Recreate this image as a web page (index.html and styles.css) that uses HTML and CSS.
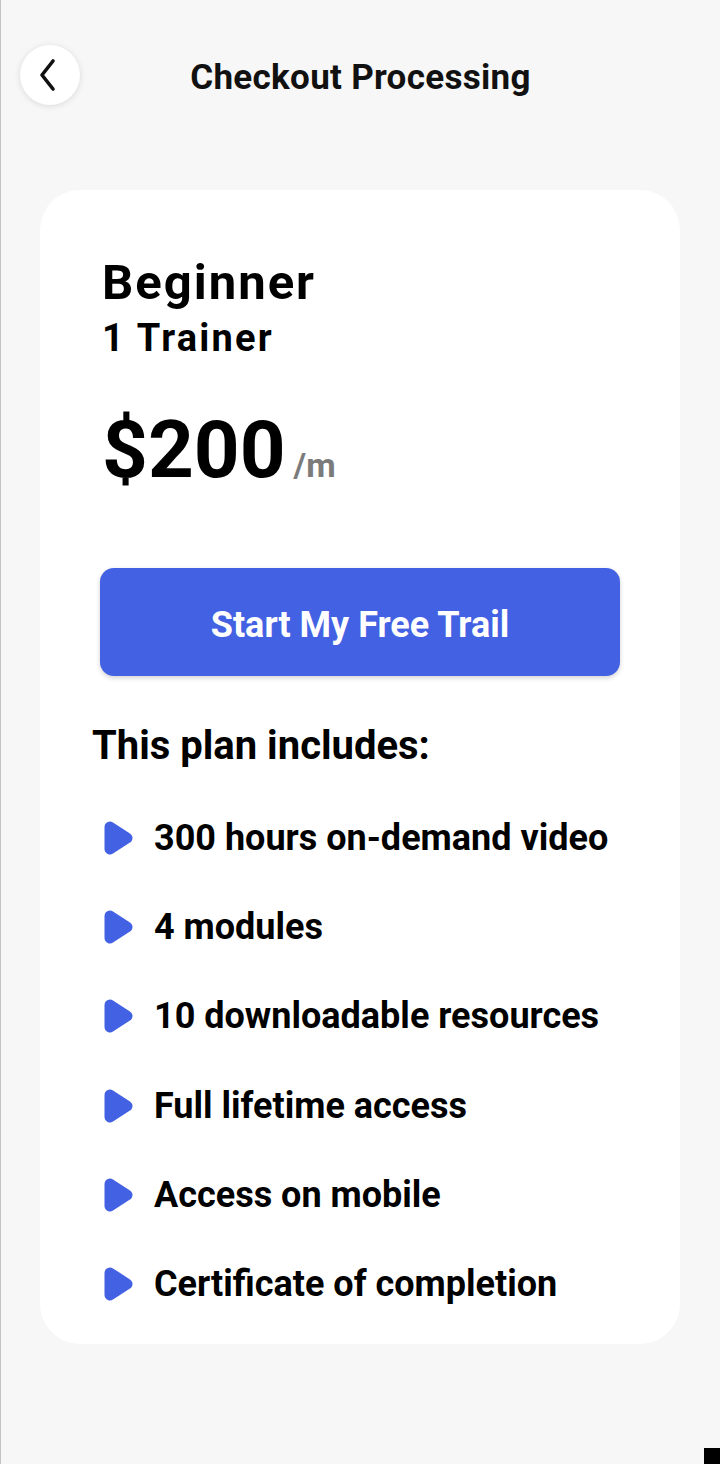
FILE: index.html
```html
<!DOCTYPE html>
<html lang="en">
<head>
<meta charset="utf-8">
<title>Checkout Processing</title>
<link rel="stylesheet" href="styles.css">
</head>
<body>
<div class="page">
  <header class="topbar">
    <button class="back" aria-label="Back">
      <svg width="24" height="36" viewBox="0 0 24 36"><path d="M17 4 L6 18 L17 32" fill="none" stroke="#111" stroke-width="3.6" stroke-linecap="round" stroke-linejoin="round"/></svg>
    </button>
    <h1 class="title">Checkout Processing</h1>
  </header>

  <main class="card">
    <div class="plan">
      <div class="plan-name">Beginner</div>
      <div class="plan-sub">1 Trainer</div>
    </div>
    <div class="price"><span class="amount">$200</span><span class="per">/m</span></div>
    <button class="cta">Start My Free Trail</button>
    <h2 class="includes">This plan includes:</h2>
    <ul class="features">
      <li><svg class="bullet" width="30" height="34" viewBox="0 0 30 34"><path d="M7 6 L24 17 L7 28 Z" fill="#4361e3" stroke="#4361e3" stroke-width="11" stroke-linejoin="round"/></svg><span>300 hours on-demand video</span></li>
      <li><svg class="bullet" width="30" height="34" viewBox="0 0 30 34"><path d="M7 6 L24 17 L7 28 Z" fill="#4361e3" stroke="#4361e3" stroke-width="11" stroke-linejoin="round"/></svg><span>4 modules</span></li>
      <li><svg class="bullet" width="30" height="34" viewBox="0 0 30 34"><path d="M7 6 L24 17 L7 28 Z" fill="#4361e3" stroke="#4361e3" stroke-width="11" stroke-linejoin="round"/></svg><span>10 downloadable resources</span></li>
      <li><svg class="bullet" width="30" height="34" viewBox="0 0 30 34"><path d="M7 6 L24 17 L7 28 Z" fill="#4361e3" stroke="#4361e3" stroke-width="11" stroke-linejoin="round"/></svg><span>Full lifetime access</span></li>
      <li><svg class="bullet" width="30" height="34" viewBox="0 0 30 34"><path d="M7 6 L24 17 L7 28 Z" fill="#4361e3" stroke="#4361e3" stroke-width="11" stroke-linejoin="round"/></svg><span>Access on mobile</span></li>
      <li><svg class="bullet" width="30" height="34" viewBox="0 0 30 34"><path d="M7 6 L24 17 L7 28 Z" fill="#4361e3" stroke="#4361e3" stroke-width="11" stroke-linejoin="round"/></svg><span>Certificate of completion</span></li>
    </ul>
  </main>
  <div class="corner"></div>
</div>
</body>
</html>
```

FILE: styles.css
```css
* { box-sizing: border-box; }
html, body { margin: 0; padding: 0; }
body {
  background: #f7f7f7;
  font-family: Roboto, "Liberation Sans", sans-serif;
  color: #000;
}
.page {
  position: relative;
  width: 720px;
  height: 1464px;
  border-left: 1px solid #c4c4c4;
  overflow: hidden;
}
.topbar {
  position: relative;
  height: 150px;
  display: flex;
  justify-content: center;
  padding-top: 55px;
}
.back {
  position: absolute;
  left: 19px;
  top: 45px;
  width: 60px;
  height: 60px;
  border-radius: 50%;
  border: none;
  background: #fff;
  box-shadow: 0 1px 6px rgba(0,0,0,0.12);
  display: flex;
  align-items: center;
  justify-content: center;
  padding: 0 4px 0 0;
}
.title {
  margin: 0;
  font-size: 35px;
  letter-spacing: 0.3px;
  font-weight: 700;
  line-height: 46px;
  color: #111;
}
.card {
  margin: 40px 0 0 39px;
  width: 640px;
  height: 1154px;
  background: #fff;
  border-radius: 40px;
  padding: 65px 40px 0 62px;
}
.plan-name {
  font-size: 49px;
  letter-spacing: 2px;
  font-weight: 700;
  line-height: 56px;
}
.plan-sub {
  font-size: 38px;
  letter-spacing: 2.2px;
  font-weight: 700;
  line-height: 42px;
  margin-top: 6px;
}
.price {
  margin-top: 46px;
  display: flex;
  align-items: baseline;
  gap: 8px;
}
.amount {
  font-size: 80px;
  font-weight: 700;
  line-height: 90px;
}
.per {
  font-size: 34px;
  font-weight: 700;
  color: #7b7b7b;
}
.cta {
  display: block;
  margin: 73px 0 0 -2px;
  width: 520px;
  height: 108px;
  border: none;
  border-radius: 14px;
  background: #4361e3;
  color: #fff;
  font-family: Roboto, "Liberation Sans", sans-serif;
  font-size: 36px;
  font-weight: 700;
  padding: 5px 0 0 0;
  box-shadow: 0 2px 5px rgba(0,0,0,0.18);
}
.includes {
  margin: 46px 0 0 -10px;
  font-size: 40px;
  font-weight: 700;
  line-height: 48px;
}
.features {
  list-style: none;
  margin: 49px 0 0 0;
  padding: 0;
  display: flex;
  flex-direction: column;
  gap: 51.2px;
}
.features li {
  display: flex;
  align-items: center;
  gap: 21px;
  height: 38px;
  font-size: 36px;
  font-weight: 700;
  margin-left: 1px;
  white-space: nowrap;
}
.bullet { flex: none; }
.corner {
  position: absolute;
  right: 0;
  bottom: 0;
  width: 16px;
  height: 16px;
  background: #000;
}
```
